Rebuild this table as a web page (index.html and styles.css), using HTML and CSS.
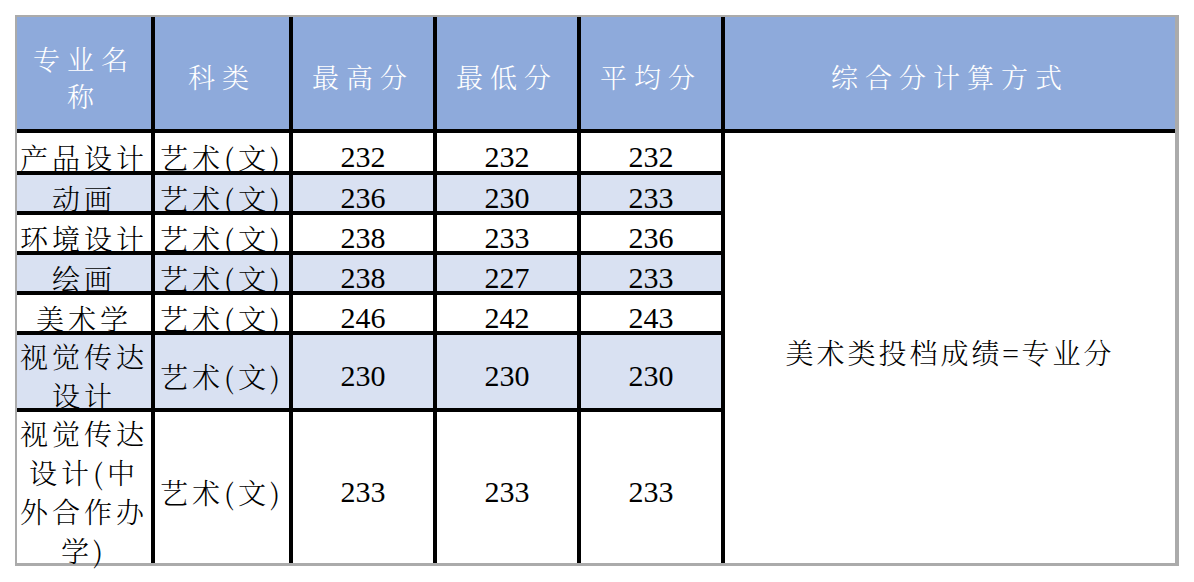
FILE: index.html
```html
<!DOCTYPE html>
<html lang="zh-CN">
<head>
<meta charset="utf-8">
<title>专业分数表</title>
<link rel="stylesheet" href="styles.css">
</head>
<body>
<div class="sheet">
  <div class="grid">
    <div class="cell head">专业名称</div>
    <div class="cell head">科类</div>
    <div class="cell head">最高分</div>
    <div class="cell head">最低分</div>
    <div class="cell head">平均分</div>
    <div class="cell head">综合分计算方式</div>

    <div class="cell">产品设计</div>
    <div class="cell">艺术(文)</div>
    <div class="cell num">232</div>
    <div class="cell num">232</div>
    <div class="cell num">232</div>
    <div class="cell formula">美术类投档成绩=专业分</div>

    <div class="cell alt">动画</div>
    <div class="cell alt">艺术(文)</div>
    <div class="cell num alt">236</div>
    <div class="cell num alt">230</div>
    <div class="cell num alt">233</div>

    <div class="cell">环境设计</div>
    <div class="cell">艺术(文)</div>
    <div class="cell num">238</div>
    <div class="cell num">233</div>
    <div class="cell num">236</div>

    <div class="cell alt">绘画</div>
    <div class="cell alt">艺术(文)</div>
    <div class="cell num alt">238</div>
    <div class="cell num alt">227</div>
    <div class="cell num alt">233</div>

    <div class="cell">美术学</div>
    <div class="cell">艺术(文)</div>
    <div class="cell num">246</div>
    <div class="cell num">242</div>
    <div class="cell num">243</div>

    <div class="cell alt multi">视觉传达设计</div>
    <div class="cell alt">艺术(文)</div>
    <div class="cell num alt">230</div>
    <div class="cell num alt">230</div>
    <div class="cell num alt">230</div>

    <div class="cell multi">视觉传达设计(中外合作办学)</div>
    <div class="cell">艺术(文)</div>
    <div class="cell num">233</div>
    <div class="cell num">233</div>
    <div class="cell num">233</div>
  </div>
</div>
</body>
</html>
```
FILE: styles.css
```css
html, body {
  margin: 0;
  background: #ffffff;
}

body {
  padding: 15px;
}

.sheet {
  display: inline-block;
  border-style: solid;
  border-color: #ababab;
  border-width: 2px 4px 3px 2px;
}

.grid {
  display: grid;
  grid-template-columns: 134px 134px 140px 140px 140px 450px;
  grid-template-rows: 112px 38px 36px 36px 36px 36px 73px 151px;
  gap: 4px;
  background: #000000;
}

.cell {
  box-sizing: border-box;
  min-width: 0;
  display: flex;
  align-items: center;
  justify-content: center;
  text-align: center;
  padding-top: 9px;
  background: #ffffff;
  color: #000000;
  font-family: "Noto Serif CJK SC", "Noto Sans CJK SC", sans-serif;
  font-weight: 300;
  font-size: 28px;
  letter-spacing: 4px;
  line-height: 38px;
}

.head {
  background: #8eaadb;
  color: #ffffff;
  font-size: 27px;
  letter-spacing: 7px;
  line-height: 37px;
  padding-top: 7px;
}

.alt {
  background: #d9e1f2;
}

.num {
  font-family: "Liberation Serif", serif;
  font-weight: 400;
  font-size: 30px;
  letter-spacing: 0;
}

.multi {
  line-height: 39px;
  padding-top: 8px;
}

.formula {
  grid-column: 6;
  grid-row: 2 / span 7;
  letter-spacing: 3px;
  padding-top: 7px;
}
```
